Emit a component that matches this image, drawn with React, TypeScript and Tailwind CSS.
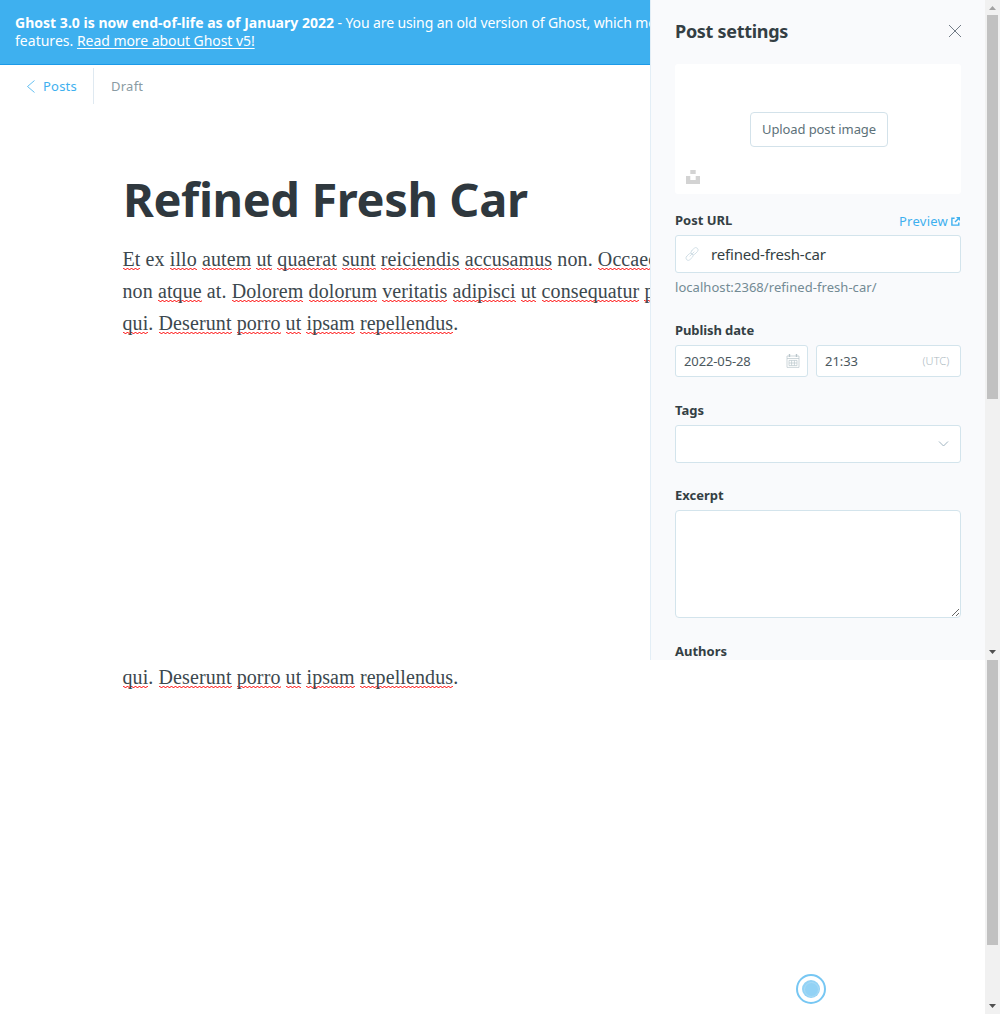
import type { ReactNode } from 'react';

function Sp({ children }: { children: ReactNode }) {
  return (
    <span className="bg-[linear-gradient(90deg,#f33_0_1px,#ff333399_1px_2px,transparent_2px_3px,#ff333399_3px_4px),linear-gradient(90deg,transparent_0_1px,#ff333399_1px_2px,#f33_2px_3px,#ff333399_3px_4px)] bg-[length:4px_1px] bg-[position:0_calc(100%-1px),0_100%] bg-repeat-x">
      {children}
    </span>
  );
}

function LastLine() {
  return (
    <>
      <Sp>qui</Sp>. <Sp>Deserunt</Sp> <Sp>porro</Sp> <Sp>ut</Sp> <Sp>ipsam</Sp> <Sp>repellendus</Sp>.
    </>
  );
}

function Label({ children }: { children: ReactNode }) {
  return <div className="h-5 text-[13px] leading-5 font-bold text-[#343f44]">{children}</div>;
}

function Banner() {
  return (
    <div className="h-[65px] shrink-0 border-b border-[#1c9ae8] bg-[#3eb0ef] px-[15px] pt-[14px] text-[14px] leading-[18px] whitespace-nowrap text-white">
      <div>
        <strong className="font-bold tracking-[0.022px]">Ghost 3.0 is now end-of-life as of January 2022</strong>
        <span className="tracking-[-0.11px]"> - You are using an old version of Ghost, which means you don't have</span>
      </div>
      <div>
        <span className="tracking-[0.02px]">features. </span>
        <span className="tracking-[-0.06px] underline underline-offset-2">Read more about Ghost v5!</span>
      </div>
    </div>
  );
}

function Header() {
  return (
    <div className="flex h-[43px] shrink-0 items-center pl-[26px] text-[13px]">
      <svg className="h-[13px] w-[9px]" viewBox="0 0 9 13" fill="none" stroke="#3eb0ef" strokeWidth="0.8" strokeLinecap="round">
        <path d="M8.2 0.8 1.5 6.5 8.2 12.2" />
      </svg>
      <span className="ml-2 tracking-[0.22px] text-[#3eb0ef]">Posts</span>
      <span className="-mt-px ml-4 h-[36px] w-px bg-[#dfe9f1]" />
      <span className="ml-[17px] tracking-[0.25px] text-[#8a9ba3]">Draft</span>
    </div>
  );
}

function Settings() {
  return (
    <aside className="flex h-[660px] w-[335px] shrink-0 flex-col overflow-hidden border-l border-[#e3eef6] bg-[#f9fafc] pr-6 pl-6">
      <div className="flex h-[64px] shrink-0 items-center justify-between pb-0.5">
        <h2 className="text-[18px] font-bold tracking-[-0.3px] text-[#343f44]">Post settings</h2>
        <svg className="-mr-px h-[14px] w-[14px]" viewBox="0 0 14 14" fill="none" stroke="#626d79" strokeWidth="0.9">
          <path d="M1 1 13 13M13 1 1 13" />
        </svg>
      </div>
      <div className="flex h-[130px] shrink-0 flex-col items-center rounded-[3px] bg-white pt-[48px]">
        <button className="ml-0.5 h-[35px] w-[138px] rounded-[4px] border border-[#d3e2ea] text-[13px] tracking-[-0.1px] text-[#5d7179]">Upload post image</button>
        <svg className="mt-[23px] ml-[11px] h-[14px] w-[14px] self-start" viewBox="0 0 14 14" fill="#d3d3d3">
          <path d="M4.3 0h5.4v4H4.3zM0 6h4.3v4h5.4V6H14v8H0z" />
        </svg>
      </div>
      <div className="mt-[16px] flex justify-between">
        <Label>Post URL</Label>
        <span className="mr-px flex h-[22px] items-center pt-0.5 text-[13px] tracking-[0.24px] text-[#3eb0ef]">
          Preview
          <svg className="mb-px ml-[3px] h-[9px] w-[9px]" viewBox="0 0 9 9" fill="none" stroke="#3eb0ef" strokeWidth="1.4">
            <path d="M3.6 1.2H.9v6.9h6.9V5.4M4 5 7.6 1.4" />
            <path d="M5 0h4v4z" fill="#3eb0ef" stroke="none" />
          </svg>
        </span>
      </div>
      <div className="mt-[3px] flex h-[38px] shrink-0 items-center rounded-[3px] border border-[#d3e4ec] bg-white pl-[9px]">
        <svg className="h-[14px] w-[14px]" viewBox="0 0 24 24" fill="none" stroke="#cfdde5" strokeWidth="1.5" strokeLinecap="round" strokeLinejoin="round">
          <rect x="9.3" y="3.2" width="14" height="8" rx="4" transform="rotate(-45 16.3 7.2)" />
          <rect x="0.7" y="12.8" width="14" height="8" rx="4" transform="rotate(-45 7.7 16.8)" />
          <path d="m8.5 15.5 7-7" />
        </svg>
        <span className="ml-3 text-[15px] tracking-[-0.18px] text-[#343f44]">refined-fresh-car</span>
      </div>
      <div className="mt-1 h-5 text-[13px] leading-5 tracking-[0.05px] text-[#738a94]">localhost:2368/refined-fresh-car/</div>
      <div className="mt-[23px] tracking-[-0.1px]"><Label>Publish date</Label></div>
      <div className="mt-[5px] flex gap-2 text-[13px] text-[#4b585e]">
        <div className="flex h-8 w-[133px] items-center justify-between rounded-[3px] border border-[#d3e4ec] bg-white pr-[7px] pl-2">
          <span className="pt-0.5 tracking-[-0.12px]">2022-05-28</span>
          <svg className="h-[14px] w-[14px]" viewBox="0 0 14 14" fill="none" stroke="#b9c5cb" strokeWidth="0.7">
            <path d="M1 2h12v11.4H1zM1 4.5h12M3 6.4h8v5.2H3zM3 9h8M5.6 6.4v5.2M8.4 6.4v5.2" />
            <path d="M3.5 0v3M10.5 0v3" strokeWidth="1.4" />
          </svg>
        </div>
        <div className="flex h-8 flex-1 items-center justify-between rounded-[3px] border border-[#d3e4ec] bg-white pr-[10.5px] pl-2">
          <span className="pt-0.5 tracking-[-0.05px]">21:33</span>
          <span className="text-[11px] font-light tracking-[0.1px] text-[#adb9bf]">(UTC)</span>
        </div>
      </div>
      <div className="mt-[23px]"><Label>Tags</Label></div>
      <div className="mt-[5px] flex h-[38px] shrink-0 items-center justify-end rounded-[3px] border border-[#d3e4ec] bg-white pr-[11px]">
        <svg className="h-[6px] w-[11px]" viewBox="0 0 11 6" fill="none" stroke="#9fb4c0">
          <path d="M1 .5 5.5 5 10 .5" />
        </svg>
      </div>
      <div className="mt-[22px]"><Label>Excerpt</Label></div>
      <textarea className="mt-[5px] block h-[108px] w-full shrink-0 rounded-[4px] border border-[#d3e4ec] bg-white" />
      <div className="mt-[23px]"><Label>Authors</Label></div>
    </aside>
  );
}

function Arrow({ up, color }: { up?: boolean; color: string }) {
  return (
    <svg className="h-[15px] w-[15px] shrink-0" viewBox="0 0 15 15" fill={color}>
      <path d={up ? 'M4 10 7.5 6 11 10z' : 'M4 5 7.5 9 11 5z'} />
    </svg>
  );
}

export default function App() {
  return (
    <div className="flex h-[1014px] w-[1000px] flex-col overflow-hidden bg-white font-['Noto_Sans',sans-serif]">
      <section className="flex h-[660px] shrink-0">
        <main className="flex w-[650px] shrink-0 flex-col overflow-hidden">
          <Banner />
          <Header />
          <h1 className="mt-[59px] ml-[123px] h-[64px] text-[47px] leading-[64px] font-bold tracking-[-0.4px] whitespace-nowrap text-[#2f383e]">Refined Fresh Car</h1>
          <div className="mt-[12px] ml-[122.5px] font-['Liberation_Serif',serif] text-[20px] leading-[32px] tracking-[0.1px] whitespace-nowrap text-[#3c484e]">
            <div><Sp>Et</Sp> ex <Sp>illo</Sp> <Sp>autem</Sp> <Sp>ut</Sp> <Sp>quaerat</Sp> <Sp>sunt</Sp> <Sp>reiciendis</Sp> <Sp>accusamus</Sp> non. <Sp>Occaecati</Sp></div>
            <div>non <Sp>atque</Sp> at. <Sp>Dolorem</Sp> <Sp>dolorum</Sp> <Sp>veritatis</Sp> <Sp>adipisci</Sp> <Sp>ut</Sp> <Sp>consequatur</Sp> <Sp>porro</Sp></div>
            <div><LastLine /></div>
          </div>
        </main>
        <Settings />
        <div className="flex w-[15px] flex-col items-center justify-between bg-[#f1f1f1]">
          <div className="flex flex-col items-center">
            <Arrow up color="#a3a3a3" />
            <div className="h-[384px] w-[11px] bg-[#c1c1c1]" />
          </div>
          <Arrow color="#505050" />
        </div>
      </section>
      <section className="flex h-[354px] shrink-0">
        <div className="flex flex-1 flex-col justify-between pb-[10px]">
          <div className="mt-px ml-[122.5px] font-['Liberation_Serif',serif] text-[20px] leading-[32px] tracking-[0.1px] whitespace-nowrap text-[#3c484e]">
            <LastLine />
          </div>
          <div className="ml-[796px] flex h-[30px] w-[30px] items-center justify-center rounded-full border-2 border-[#77c7f3]">
            <div className="flex h-[18px] w-[18px] items-center justify-center rounded-full bg-[#92d2f5]">
              <div className="h-[15px] w-[15px] rounded-full border border-[#a9dbf6]" />
            </div>
          </div>
        </div>
        <div className="flex w-[15px] flex-col items-center justify-between bg-[#f1f1f1]">
          <div className="h-[285px] w-[11px] bg-[#c1c1c1]" />
          <Arrow color="#505050" />
        </div>
      </section>
    </div>
  );
}
